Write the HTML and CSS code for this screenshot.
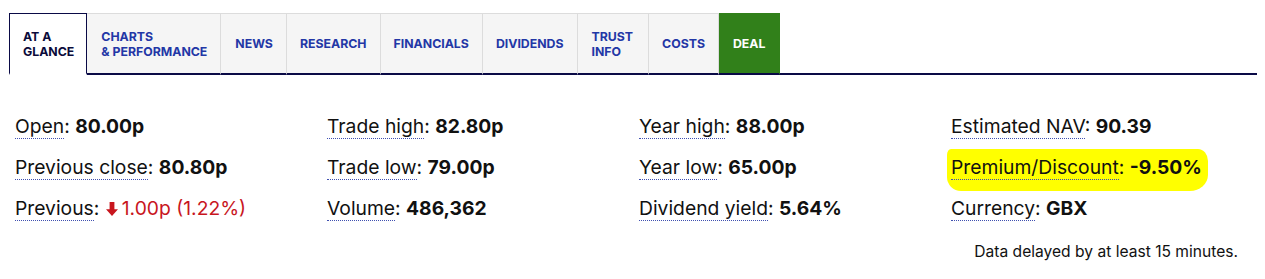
FILE: index.html
```html
<!DOCTYPE html>
<html>
<head>
<meta charset="utf-8">
<link rel="stylesheet" href="styles.css">
</head>
<body>
<div class="page">
  <nav class="tabs">
    <a class="tab active">AT A<br>GLANCE</a>
    <a class="tab tab-wide">CHARTS<br>&amp; PERFORMANCE</a>
    <a class="tab tab-wide">NEWS</a>
    <a class="tab">RESEARCH</a>
    <a class="tab">FINANCIALS</a>
    <a class="tab">DIVIDENDS</a>
    <a class="tab tab-wider">TRUST<br>INFO</a>
    <a class="tab">COSTS</a>
    <a class="tab deal">DEAL</a>
  </nav>
  <div class="stats">
    <div class="col">
      <div class="stat"><span class="label">Open</span>: <b>80.00p</b></div>
      <div class="stat"><span class="label">Previous close</span>: <b>80.80p</b></div>
      <div class="stat"><span class="label">Previous</span>: <span class="down"><svg class="arrow" viewBox="0 0 12 14" width="12" height="14"><path d="M3.6 0h4.8v7.2H12L6 14 0 7.2h3.6z" fill="#c8161e"/></svg>1.00p (1.22%)</span></div>
    </div>
    <div class="col">
      <div class="stat"><span class="label">Trade high</span>: <b>82.80p</b></div>
      <div class="stat"><span class="label">Trade low</span>: <b>79.00p</b></div>
      <div class="stat"><span class="label">Volume</span>: <b>486,362</b></div>
    </div>
    <div class="col">
      <div class="stat"><span class="label">Year high</span>: <b>88.00p</b></div>
      <div class="stat"><span class="label">Year low</span>: <b>65.00p</b></div>
      <div class="stat"><span class="label">Dividend yield</span>: <b>5.64%</b></div>
    </div>
    <div class="col">
      <div class="stat"><span class="label">Estimated NAV</span>: <b>90.39</b></div>
      <div class="stat hl"><span class="label">Premium/Discount</span>: <b>-9.50%</b></div>
      <div class="stat"><span class="label">Currency</span>: <b>GBX</b></div>
    </div>
  </div>
  <p class="note">Data delayed by at least 15 minutes.</p>
</div>
</body>
</html>
```
FILE: styles.css
```css
* { box-sizing: border-box; }
html, body { margin: 0; background: #fff; }
body {
  font-family: Inter, "Noto Sans", sans-serif;
  color: #111;
}
.page {
  padding: 13px 8px 0 9px;
}
.tabs {
  display: flex;
  height: 62px;
  border-bottom: 2px solid #0a0a46;
}
.tab {
  display: flex;
  align-items: center;
  padding: 0 13px;
  background: #f5f5f5;
  border-top: 1px solid #dcdcdc;
  border-right: 1px solid #dcdcdc;
  color: #2337a6;
  font-size: 12.3px;
  font-weight: 700;
  line-height: 15px;
  margin-bottom: -2px;
  border-bottom: 2px solid #0a0a46;
}
.tab.tab-wide { padding-left: 14px; }
.tab.tab-wider { padding: 0 15px 0 14px; }
.tab.active {
  background: #fff;
  color: #0b0b3a;
  border: 1px solid #0a0a46;
  border-bottom: 2px solid #fff;
  padding: 0 12px 0 13px;
}
.tab.deal {
  background: #31801a;
  color: #fff;
  border-top-color: #31801a;
  border-right-color: #31801a;
  padding: 0 14px;
}
.stats {
  display: grid;
  grid-template-columns: repeat(4, 312px);
  padding: 39px 0 0 6px;
  font-size: 19.3px;
  line-height: 24px;
}
.col {
  display: flex;
  flex-direction: column;
  gap: 17px;
}
.stat { white-space: nowrap; }
.stat b { font-weight: 700; }
.label {
  border-bottom: 1px dotted #4050b0;
}
.down { color: #c8161e; }
.arrow { margin: 0 4px 0 1px; vertical-align: -1px; }
.hl { position: relative; z-index: 0; }
.hl::before {
  content: "";
  position: absolute;
  left: -4px;
  top: -6px;
  width: 261px;
  height: 42px;
  background: #ffff00;
  border-radius: 4px 10px 18px 14px / 6px 12px 16px 14px;
  z-index: -1;
}
.note {
  margin: 22px 19px 0 0;
  text-align: right;
  font-size: 15.6px;
  color: #111;
}
```
